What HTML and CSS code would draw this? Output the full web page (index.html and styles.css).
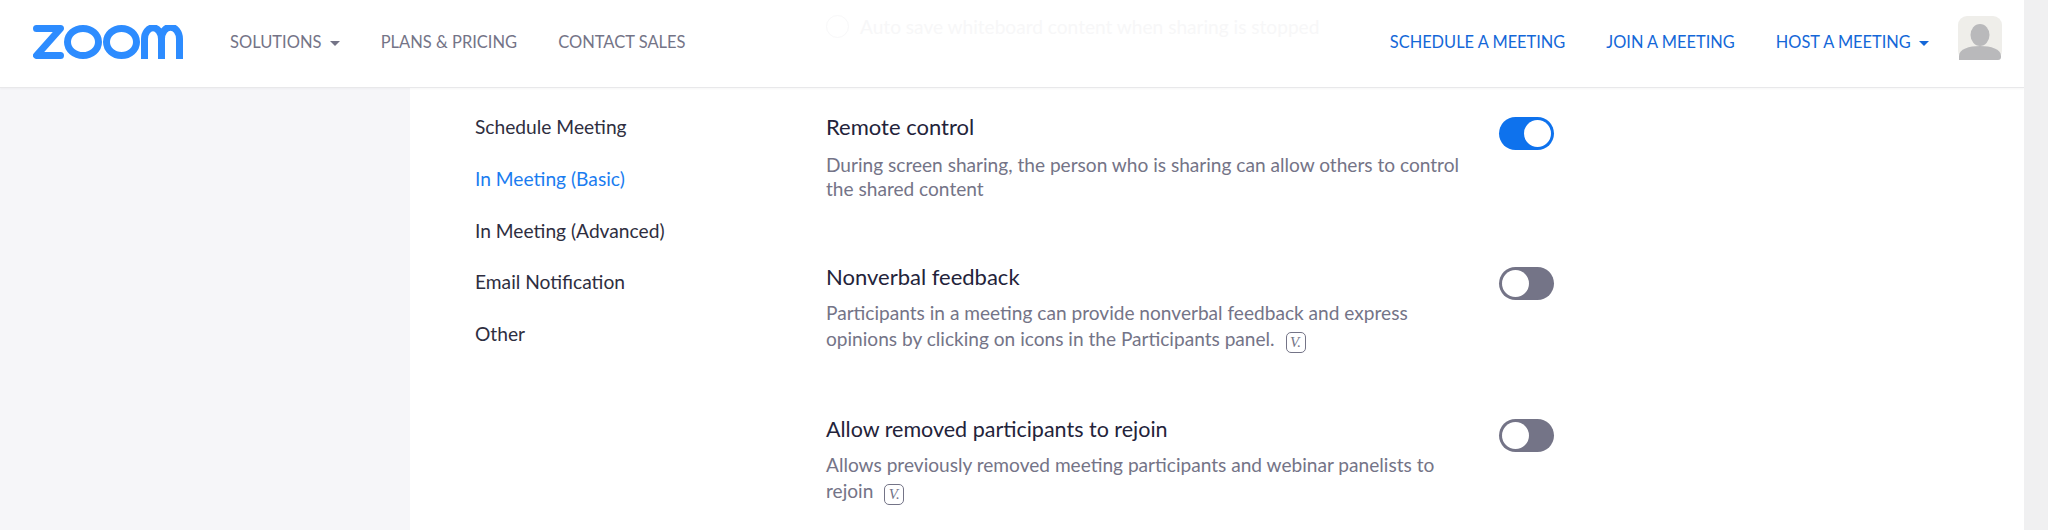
FILE: index.html
```html
<!DOCTYPE html>
<html lang="en">
<head>
    <meta charset="UTF-8">
    <meta name="viewport" content="width=device-width, initial-scale=1.0">
    <title>Zoom Settings</title>
    <link rel="stylesheet" href="styles.css">
</head>
<body>
    <div class="page">
        <header class="topbar">
            <div class="ghost-row">
                <span class="ghost-check"></span>
                <span>Auto save whiteboard content when sharing is stopped</span>
            </div>
            <svg class="logo" viewBox="0 0 150 34" width="150" height="34" aria-label="zoom">
                <g fill="none" stroke="#2d8cff" stroke-width="7">
                    <path d="M3.5 3.5h24L3.5 30.5h24" stroke-linejoin="round" stroke-linecap="round"/>
                    <ellipse cx="50" cy="17" rx="15.5" ry="13.5"/>
                    <ellipse cx="88.5" cy="17" rx="15" ry="13.5"/>
                    <path d="M111.5 34V14a8 10.5 0 0 1 17 0M128.5 34V14a8 10.5 0 0 1 18 0v20"/>
                </g>
            </svg>
            <nav class="nav nav-left">
                <a>SOLUTIONS <span class="caret"></span></a>
                <a>PLANS &amp; PRICING</a>
                <a>CONTACT SALES</a>
            </nav>
            <nav class="nav nav-right">
                <a>SCHEDULE A MEETING</a>
                <a>JOIN A MEETING</a>
                <a>HOST A MEETING <span class="caret"></span></a>
            </nav>
            <svg class="avatar" viewBox="0 0 44 44" width="44" height="44">
                <rect width="44" height="44" rx="9" fill="#efeeea"/>
                <ellipse cx="22" cy="19" rx="9.5" ry="11" fill="#b9b9bb"/>
                <path d="M1 44v-4c0-7 10-10 21-10s21 3 21 10v1a3 3 0 0 1-3 3z" fill="#b9b9bb"/>
            </svg>
        </header>

        <div class="content">
            <ul class="sidemenu">
                <li>Schedule Meeting</li>
                <li class="active">In Meeting (Basic)</li>
                <li>In Meeting (Advanced)</li>
                <li>Email Notification</li>
                <li>Other</li>
            </ul>

            <div class="settings">
                <section class="setting s-remote">
                    <div class="setting-text">
                        <h4>Remote control</h4>
                        <p>During screen sharing, the person who is sharing can allow others to control the shared content</p>
                    </div>
                    <span class="toggle on"></span>
                </section>
                <section class="setting s-nonverbal">
                    <div class="setting-text">
                        <h4>Nonverbal feedback</h4>
                        <p>Participants in a meeting can provide nonverbal feedback and express opinions by clicking on icons in the Participants panel. <span class="v-icon">V.</span></p>
                    </div>
                    <span class="toggle"></span>
                </section>
                <section class="setting s-rejoin">
                    <div class="setting-text">
                        <h4>Allow removed participants to rejoin</h4>
                        <p>Allows previously removed meeting participants and webinar panelists to rejoin <span class="v-icon">V.</span></p>
                    </div>
                    <span class="toggle"></span>
                </section>
            </div>
        </div>
    </div>
</body>
</html>
```

FILE: styles.css
```css
* { margin: 0; padding: 0; box-sizing: border-box; }
html, body { height: 100%; overflow: hidden; }
body {
    font-family: Lato, sans-serif;
    background: #f0f0f1;
    color: #23233a;
}
.page { width: 2024px; height: 530px; overflow: hidden; background: #f6f6f9; }

.topbar {
    position: relative;
    display: flex;
    align-items: center;
    height: 88px;
    padding: 0 22px 4px 33px;
    background: #fff;
    border-bottom: 1px solid #e8e8ea;
    box-shadow: 0 1px 2px rgba(0,0,0,0.04);
    z-index: 2;
}
.ghost-row {
    position: absolute;
    left: 826px;
    top: 15px;
    display: flex;
    align-items: center;
    gap: 11px;
    font-size: 19.1px;
    color: #f7f7f8;
}
.ghost-check {
    width: 23px;
    height: 23px;
    border: 1px solid #f8f8f9;
    border-radius: 50%;
}
.logo { width: 150px; height: 34px; flex: none; }
.nav { display: flex; gap: 41px; font-size: 16.5px; }
.nav a { white-space: nowrap; }
.nav-left { margin-left: 47px; color: #747487; }
.nav-right { margin-left: auto; margin-right: 29px; font-size: 16.4px; color: #1467d8; }
.caret {
    display: inline-block;
    width: 0;
    height: 0;
    margin-left: 4px;
    vertical-align: 2px;
    border-left: 5px solid transparent;
    border-right: 5px solid transparent;
    border-top: 5px solid currentColor;
}
.avatar { flex: none; margin-top: -8px; }

.content {
    display: flex;
    margin-left: 410px;
    height: 442px;
    background: #fff;
}
.sidemenu {
    list-style: none;
    width: 416px;
    padding: 0 0 0 65px;
    font-size: 19.2px;
    color: #2e2e40;
}
.sidemenu li { height: 51.8px; line-height: 51.8px; }
.sidemenu li:first-child { margin-top: 13px; }
.sidemenu .active { color: #1a7cf0; }

.settings { width: 728px; padding-top: 26px; }
.setting {
    display: flex;
    justify-content: space-between;
    align-items: flex-start;
}
.s-remote { height: 150px; }
.s-nonverbal { height: 152px; }
.setting-text { width: 645px; }
.setting h4 { font-size: 22px; font-weight: 400; line-height: 26px; margin-bottom: 10px; }
.s-rejoin h4 { font-size: 21.5px; }
.setting p { font-size: 19.1px; line-height: 25.5px; color: #747487; }
.s-remote p { line-height: 24px; margin-top: 13px; }
.toggle {
    position: relative;
    display: block;
    flex: none;
    width: 55px;
    height: 33px;
    margin-top: 3px;
    border-radius: 17px;
    background: #747487;
}
.toggle::after {
    content: "";
    position: absolute;
    left: 3px;
    top: 3px;
    width: 27px;
    height: 27px;
    border-radius: 50%;
    background: #fff;
}
.toggle.on { background: #0e72ed; }
.toggle.on::after { left: 25px; }
.v-icon {
    display: inline-block;
    width: 20px;
    height: 21px;
    margin-left: 6px;
    border: 1.5px solid #747487;
    border-radius: 5px;
    font: italic 15px/18px "Liberation Serif", serif;
    text-align: center;
    vertical-align: -1px;
    color: #747487;
}
```
